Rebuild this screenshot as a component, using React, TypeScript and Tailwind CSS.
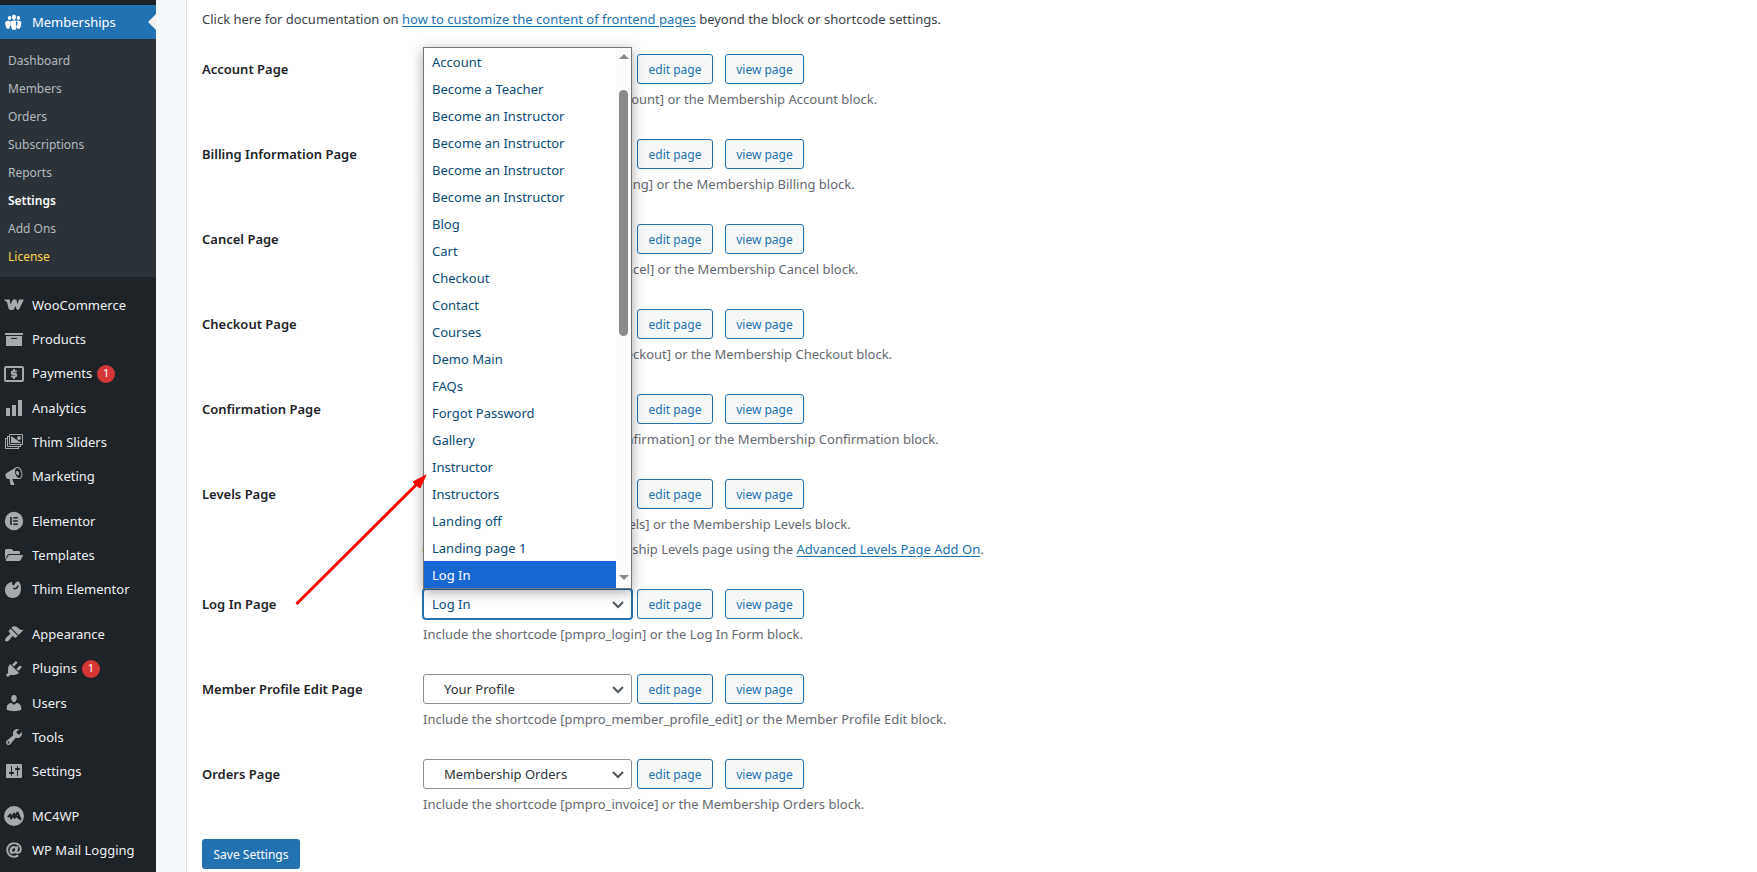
import type { ReactNode } from "react";
import { FaAt, FaFolderOpen } from "react-icons/fa";

const paths = {
  groups:
    "M8.03 4.46c-.29 1.28.55 3.46 1.97 3.46 1.41 0 2.25-2.18 1.96-3.46-.22-.98-1.08-1.63-1.96-1.63-.89 0-1.74.65-1.97 1.63zm-4.13.9c-.25 1.08.47 2.93 1.67 2.93s1.92-1.85 1.67-2.93c-.19-.83-.92-1.39-1.67-1.39s-1.48.56-1.67 1.39zm8.86 0c-.25 1.08.47 2.93 1.66 2.93 1.2 0 1.92-1.85 1.67-2.93-.19-.83-.92-1.39-1.67-1.39-.74 0-1.47.56-1.66 1.39zm-.59 11.43l1.25-4.3C14.2 10 12.71 8.47 10 8.47c-2.72 0-4.21 1.53-3.44 4.02l1.26 4.3C8.05 17.51 9 18 10 18c.98 0 1.94-.49 2.17-1.21zm-6.1-7.63c.49.67.96 1.83.42 3.59l-1.12 3.79c-.34.2-.77.31-1.2.31-.85 0-1.65-.41-1.85-1.03l-1.07-3.65c-.65-2.11.61-3.4 2.92-3.4.27 0 .54.02.79.06-.1.1-.2.22-.3.33zm8.35-.39c2.31 0 3.58 1.29 2.92 3.4l-1.07 3.65c-.2.62-1 1.03-1.85 1.03-.43 0-.86-.11-1.2-.31l-1.11-3.77c-.55-1.78-.08-2.94.42-3.61-.08-.11-.23-.23-.3-.33.25-.04.51-.06.78-.06z",
  archive: "M19 4v2H1V4h18zM2 7h16v10H2V7zm11 3V9H7v1h6z",
  bars: "M18 18V2h-4v16h4zm-6 0V7H8v11h4zm-6 0v-8H2v8h4z",
  megaphone:
    "M18.15 5.94c.46 1.62.38 3.22-.02 4.48-.42 1.28-1.26 2.18-2.3 2.48-.16.06-.26.06-.4.06-.06.02-.12.02-.18.02-.06.02-.14.02-.22.02h-6.8l2.22 5.5c.02.14-.06.26-.14.34-.08.1-.24.16-.34.16H6.95c-.1 0-.26-.06-.34-.16-.08-.08-.16-.2-.14-.34l-1-5.5H4.25l-.02-.02c-.5.06-1.08-.18-1.54-.62s-.88-1.08-1.06-1.88c-.24-.8-.2-1.56-.02-2.2.18-.62.58-1.08 1.06-1.3l.02-.02 9-5.4c.1-.06.18-.1.24-.16.06-.04.14-.08.24-.12.16-.08.28-.12.5-.18 1.04-.3 2.24.1 3.22.98s1.84 2.24 2.26 3.86zm-2.58 5.98h-.02c.4-.1.74-.34 1.04-.7.58-.7.86-1.76.86-3.04 0-.64-.1-1.3-.28-1.98-.34-1.36-1.02-2.5-1.78-3.24s-1.68-1.1-2.46-.88c-.82.22-1.4.96-1.7 2-.32 1.04-.28 2.36.06 3.72.38 1.36 1 2.5 1.8 3.24.78.74 1.62 1.1 2.48.88zm-2.54-7.08c.22-.04.42-.02.62.04.38.16.76.48 1.02 1s.42 1.2.42 1.78c0 .3-.04.56-.12.8-.18.48-.44.84-.86.94-.34.1-.8-.06-1.14-.4s-.64-.86-.78-1.5c-.18-.62-.12-1.24.02-1.72s.48-.84.82-.94z",
  brush:
    "M14.48 11.06L7.41 3.99l1.5-1.5c.5-.56 2.3-.47 3.51.32 1.21.8 1.43 1.28 2.91 2.1 1.18.64 2.45 1.26 4.45.85zm-.71.71L6.7 4.7 4.93 6.47c-.39.39-.39 1.02 0 1.41l1.06 1.06c.39.39.39 1.03 0 1.42-.6.6-1.43 1.11-2.21 1.69-.35.26-.7.53-1.01.84C1.43 14.23.4 16.08 1.4 17.07c.99 1 2.84-.03 4.18-1.36.31-.31.58-.66.85-1.02.57-.78 1.08-1.61 1.69-2.21.39-.39 1.02-.39 1.41 0l1.06 1.06c.39.39 1.02.39 1.41 0z",
  plug: "M13.11 4.36L9.87 7.6 8 5.73l3.24-3.24c.35-.34 1.05-.2 1.56.32.52.51.66 1.21.31 1.55zm-8 1.77l.91-1.12 9.01 9.01-1.19.84c-.71.71-2.63 1.16-3.82 1.16H6.14L4.9 17.26c-.59.59-1.54.59-2.12 0-.59-.58-.59-1.53 0-2.12l1.24-1.24v-3.88c0-1.13.4-3.19 1.09-3.89zm7.26 3.97l3.24-3.24c.34-.35 1.04-.21 1.55.31.52.51.66 1.21.31 1.55l-3.24 3.25z",
  user: "M10 9.25c-2.27 0-2.73-3.44-2.73-3.44C7 4.02 7.82 2 9.97 2c2.16 0 2.98 2.02 2.71 3.81 0 0-.41 3.44-2.68 3.44zm0 2.57L12.72 10c2.39 0 4.52 2.33 4.52 4.53v2.49s-3.65 1.13-7.24 1.13c-3.65 0-7.24-1.13-7.24-1.13v-2.49c0-2.25 1.94-4.48 4.47-4.48z",
  wrench:
    "M16.68 9.77c-1.34 1.34-3.3 1.67-4.95.99l-5.41 6.52c-.99.99-2.59.99-3.58 0s-.99-2.59 0-3.57l6.52-5.42c-.68-1.65-.35-3.61.99-4.95 1.28-1.28 3.12-1.62 4.72-1.06l-2.89 2.89 2.82 2.82 2.86-2.87c.53 1.58.18 3.39-1.08 4.65zM3.81 16.21c.4.39 1.04.39 1.43 0 .4-.4.4-1.04 0-1.43-.39-.4-1.03-.4-1.43 0-.39.39-.39 1.03 0 1.43z",
  sliders:
    "M18 16V4c0-.55-.45-1-1-1H3c-.55 0-1 .45-1 1v12c0 .55.45 1 1 1h14c.55 0 1-.45 1-1zM8 11h1c.55 0 1 .45 1 1s-.45 1-1 1H8v1.5c0 .28-.22.5-.5.5s-.5-.22-.5-.5V13H6c-.55 0-1-.45-1-1s.45-1 1-1h1V5.5c0-.28.22-.5.5-.5s.5.22.5.5V11zm5-2h-1c-.55 0-1-.45-1-1s.45-1 1-1h1V5.5c0-.28.22-.5.5-.5s.5.22.5.5V7h1c.55 0 1 .45 1 1s-.45 1-1 1h-1v5.5c0 .28-.22.5-.5.5s-.5-.22-.5-.5V9z",
};

function Icon({ children }: { children: ReactNode }) {
  return (
    <svg viewBox="0 0 20 20" fill="currentColor" aria-hidden="true" className="size-5 shrink-0">
      {children}
    </svg>
  );
}

const glyph = (d: string) => (
  <Icon>
    <path fillRule="evenodd" d={d} />
  </Icon>
);

const wooIcon = (
  <Icon>
    <path d="M.2 4.500h5.500l.8 5 2.400-5h3.500l.8 4.500 2-4.500h4.700l-4.500 9.300c-.8 1.500-2.700 1.500-3.100-.2l-.7-2.500-1.500 2.800c-.9 1.600-4.900 1.600-5.500-.2L3.300 8C3 6.600 1.800 6.300.8 6z" />
  </Icon>
);

const paymentsIcon = (
  <Icon>
    <rect x="1" y="3" width="18" height="14" rx="1" fill="none" stroke="currentColor" strokeWidth="2" />
    <path
      d="M12.800 7.500H9a1.250 1.250 0 0 0 0 2.500h2a1.250 1.250 0 0 1 0 2.500H7.200M10 5v2M10 13v2"
      fill="none"
      stroke="currentColor"
      strokeWidth="2"
    />
  </Icon>
);

const slidesIcon = (
  <Icon>
    <path
      d="M5.500 2.500h13v10h-13zM3.500 4v10.500H17M1.500 6v10.500H15M3 4.500h2M1 6.500h2M16.500 13v2M14.500 15v2"
      fill="none"
      stroke="currentColor"
    />
    <circle cx="15" cy="6" r="1.900" />
    <path d="M7 4v7h10.500z" />
  </Icon>
);

const elementorIcon = (
  <Icon>
    <path
      fillRule="evenodd"
      d="M10 .8a9.200 9.200 0 1 0 0 18.400A9.200 9.200 0 0 0 10 .8zM6.200 6h1.600v8H6.200zM9.200 6h4.600v1.600H9.200zM9.200 9.200h4.600v1.600H9.200zM9.200 12.400h4.600V14H9.200z"
    />
  </Icon>
);

const thimIcon = (
  <Icon>
    <path d="M8 3C4 3.500 1 6.800 1 11c0 4.600 3.200 8 7.800 8 4.700 0 8.200-4 8.200-9 0-2.800-.4-5.500-2-7-1-.8-2.400-.6-3.200.5L10 6C9.300 7 8.300 6 8.300 5z" />
    <path d="M9.500 9c1.500 1.500 4 .2 4.500-2.500" fill="none" stroke="#1d2327" strokeWidth="1.500" />
  </Icon>
);

const mcIcon = (
  <Icon>
    <circle cx="10" cy="10" r="10" />
    <path
      d="M4.500 10.500 6.500 8.500l.5 4L10.200 7.500l.3 4.500 3-5.500 3 6.800-3.500-2.500"
      fill="none"
      stroke="#1d2327"
      strokeWidth="2"
      strokeLinejoin="round"
      strokeLinecap="round"
    />
  </Icon>
);

type MenuEntry = { label: string; icon: ReactNode; badge?: number };

const menuGroups: MenuEntry[][] = [
  [
    { label: "WooCommerce", icon: wooIcon },
    { label: "Products", icon: glyph(paths.archive) },
    { label: "Payments", icon: paymentsIcon, badge: 1 },
    { label: "Analytics", icon: glyph(paths.bars) },
    { label: "Thim Sliders", icon: slidesIcon },
    { label: "Marketing", icon: glyph(paths.megaphone) },
  ],
  [
    { label: "Elementor", icon: elementorIcon },
    { label: "Templates", icon: <FaFolderOpen className="size-[18px] shrink-0" /> },
    { label: "Thim Elementor", icon: thimIcon },
  ],
  [
    { label: "Appearance", icon: glyph(paths.brush) },
    { label: "Plugins", icon: glyph(paths.plug), badge: 1 },
    { label: "Users", icon: glyph(paths.user) },
    { label: "Tools", icon: glyph(paths.wrench) },
    { label: "Settings", icon: glyph(paths.sliders) },
  ],
  [
    { label: "MC4WP", icon: mcIcon },
    { label: "WP Mail Logging", icon: <FaAt className="size-4 shrink-0" /> },
  ],
];

const subMenu = ["Dashboard", "Members", "Orders", "Subscriptions", "Reports", "Settings", "Add Ons", "License"];

function subMenuColor(label: string) {
  if (label === "Settings") return "font-semibold text-white";
  if (label === "License") return "text-[#fcd34d]";
  return "text-[#b4b9be]";
}

function Sidebar() {
  return (
    <nav aria-label="Admin menu" className="w-[156px] shrink-0 bg-[#1d2327] pt-[5px] text-[13px] text-[#f0f0f1]">
      <a href="#memberships" className="relative flex h-[34px] items-center bg-[#2271b1] text-white">
        <span className="flex w-8 justify-center pr-1">{glyph(paths.groups)}</span>
        <span className="pt-px">Memberships</span>
        <span className="absolute top-1/2 right-0 -translate-y-1/2 border-y-8 border-r-8 border-y-transparent border-r-[#f0f0f1]" />
      </a>
      <ul className="bg-[#2c3338] py-[7px]">
        {subMenu.map((label) => (
          <li key={label}>
            <a href="#submenu" className={`flex h-7 items-center px-2 pt-px text-[12px] ${subMenuColor(label)}`}>
              {label}
            </a>
          </li>
        ))}
      </ul>
      {menuGroups.map((group) => (
        <ul key={group[0].label} className="pt-[11px]">
          {group.map(({ label, icon, badge }) => (
            <li key={label}>
              <a href="#menu" className={`flex items-center ${badge ? "h-[35px]" : "h-[34px]"}`}>
                <span className="flex w-8 shrink-0 justify-center pr-1 text-[#a7aaad]">{icon}</span>
                <span className="pt-px whitespace-nowrap">{label}</span>
                {badge && (
                  <span className="ml-[5px] flex size-[18px] items-center justify-center rounded-full bg-[#d63638] text-[11px] text-white">
                    {badge}
                  </span>
                )}
              </a>
            </li>
          ))}
        </ul>
      ))}
    </nav>
  );
}

const pageOptions = [
  "Account",
  "Become a Teacher",
  "Become an Instructor",
  "Become an Instructor",
  "Become an Instructor",
  "Become an Instructor",
  "Blog",
  "Cart",
  "Checkout",
  "Contact",
  "Courses",
  "Demo Main",
  "FAQs",
  "Forgot Password",
  "Gallery",
  "Instructor",
  "Instructors",
  "Landing off",
  "Landing page 1",
  "Log In",
];

function OptionList() {
  return (
    <div className="absolute bottom-full left-0 z-10 flex w-full border border-[#767676] bg-white shadow-[0_3px_12px_rgba(0,0,0,0.35)]">
      <ul role="listbox" aria-label="Pages" className="flex-1 text-[13px] text-[#0a4b78]">
        {pageOptions.map((option, index) => (
          <li
            key={index}
            role="option"
            aria-selected={option === "Log In"}
            className="flex h-[27px] items-center px-2 pt-[3px] aria-selected:bg-[#1967d2] aria-selected:text-white"
          >
            {option}
          </li>
        ))}
      </ul>
      <div className="flex w-[15px] flex-col items-center bg-[#fcfcfc] pt-1.5 pb-2">
        <span className="border-x-[5px] border-b-[5px] border-x-transparent border-b-[#8b8b8b]" />
        <span className="mt-[31px] h-[246px] w-[9px] rounded-full bg-[#8b8b8b]" />
        <span className="mt-auto border-x-[5px] border-t-[5px] border-x-transparent border-t-[#8b8b8b]" />
      </div>
    </div>
  );
}

type PageRow = { label: string; value: string; code: string; block: string; open?: boolean; levels?: boolean };

const rows: PageRow[] = [
  { label: "Account Page", value: "Membership Account", code: "pmpro_account", block: "Membership Account" },
  { label: "Billing Information Page", value: "Membership Billing", code: "pmpro_billing", block: "Membership Billing" },
  { label: "Cancel Page", value: "Membership Cancel", code: "pmpro_cancel", block: "Membership Cancel" },
  { label: "Checkout Page", value: "Membership Checkout", code: "pmpro_checkout", block: "Membership Checkout" },
  {
    label: "Confirmation Page",
    value: "Membership Confirmation",
    code: "pmpro_confirmation",
    block: "Membership Confirmation",
  },
  { label: "Levels Page", value: "Membership Levels", code: "pmpro_levels", block: "Membership Levels", levels: true },
  { label: "Log In Page", value: "Log In", code: "pmpro_login", block: "Log In Form", open: true },
  {
    label: "Member Profile Edit Page",
    value: "Your Profile",
    code: "pmpro_member_profile_edit",
    block: "Member Profile Edit",
  },
  { label: "Orders Page", value: "Membership Orders", code: "pmpro_invoice", block: "Membership Orders" },
];

const buttonStyle =
  "h-[30px] rounded-[3px] border border-[#2271b1] bg-[#f6f7f7] pt-px text-center text-[12px] text-[#2271b1]";

function Row({ row }: { row: PageRow }) {
  const id = row.code;
  return (
    <div className="flex pb-[30px]">
      <label htmlFor={id} className="w-[220px] shrink-0 pt-[5px] text-[13px] leading-5 font-semibold text-[#1d2327]">
        {row.label}
      </label>
      <div className="min-w-0 flex-1">
        <div className="flex">
          <div className="relative mr-[5px] ml-px">
            <select
              id={id}
              defaultValue={row.value}
              className={`block h-[30px] w-[209px] appearance-none rounded-[3px] border bg-white pt-0.5 text-[13px] ${
                row.open
                  ? "border-[#2271b1] pl-2 text-[#0a4b78] ring-1 ring-[#2271b1]"
                  : "border-[#8c8f94] pl-5 text-[#2c3338]"
              }`}
            >
              <option>{row.value}</option>
            </select>
            <svg
              viewBox="0 0 12 8"
              fill="none"
              stroke="#50575e"
              strokeWidth="2"
              aria-hidden="true"
              className="pointer-events-none absolute top-3 right-2 h-2 w-3"
            >
              <path d="m1 1 5 5 5-5" />
            </svg>
            {row.open && <OptionList />}
          </div>
          <button className={`${buttonStyle} mr-3 w-[76px]`}>edit page</button>
          <button className={`${buttonStyle} w-[79px]`}>view page</button>
        </div>
        <p className="pt-[5px] pl-px text-[13px] leading-5 text-[#646970]">
          Include the shortcode [{row.code}] or the {row.block} block.
        </p>
        {row.levels && (
          <p className="pt-[5px] text-[13px] leading-5 text-[#646970]">
            <span className="text-[#dba617]">Optional:</span> Customize your Membership Levels page using the{" "}
            <a href="#add-on" className="text-[#2271b1] underline underline-offset-2">
              Advanced Levels Page Add On
            </a>
            .
          </p>
        )}
      </div>
    </div>
  );
}

export default function App() {
  return (
    <div className="flex h-screen overflow-hidden bg-[#f4f8fb] font-['Noto_Sans','Open_Sans',sans-serif]">
      <Sidebar />
      <main className="relative ml-[30px] min-w-0 flex-1 border-l border-[#dcdfe4] bg-white pl-[15px]">
        <p className="pt-[9px] pb-[25px] text-[13px] leading-5 text-[#3c434a]">
          Click here for documentation on{" "}
          <a href="#docs" className="text-[#2271b1] underline underline-offset-2">
            how to customize the content of frontend pages
          </a>{" "}
          beyond the block or shortcode settings.
        </p>
        <div className="-mb-[5px]">
          {rows.map((row) => (
            <Row key={row.code} row={row} />
          ))}
        </div>
        <button className="h-[30px] w-[98px] rounded-[3px] bg-[#2271b1] pt-px text-[12px] text-white">
          Save Settings
        </button>
        <svg
          viewBox="0 0 130 130"
          aria-hidden="true"
          className="pointer-events-none absolute top-[475px] left-[108px] z-20 size-[130px] overflow-visible"
        >
          <path d="M1.500 129 122 9" stroke="#ff0000" strokeWidth="3" />
          <path d="m131 0-13 7 3 3 4 3z" fill="#ff0000" stroke="#ff0000" strokeLinejoin="round" />
        </svg>
      </main>
    </div>
  );
}
